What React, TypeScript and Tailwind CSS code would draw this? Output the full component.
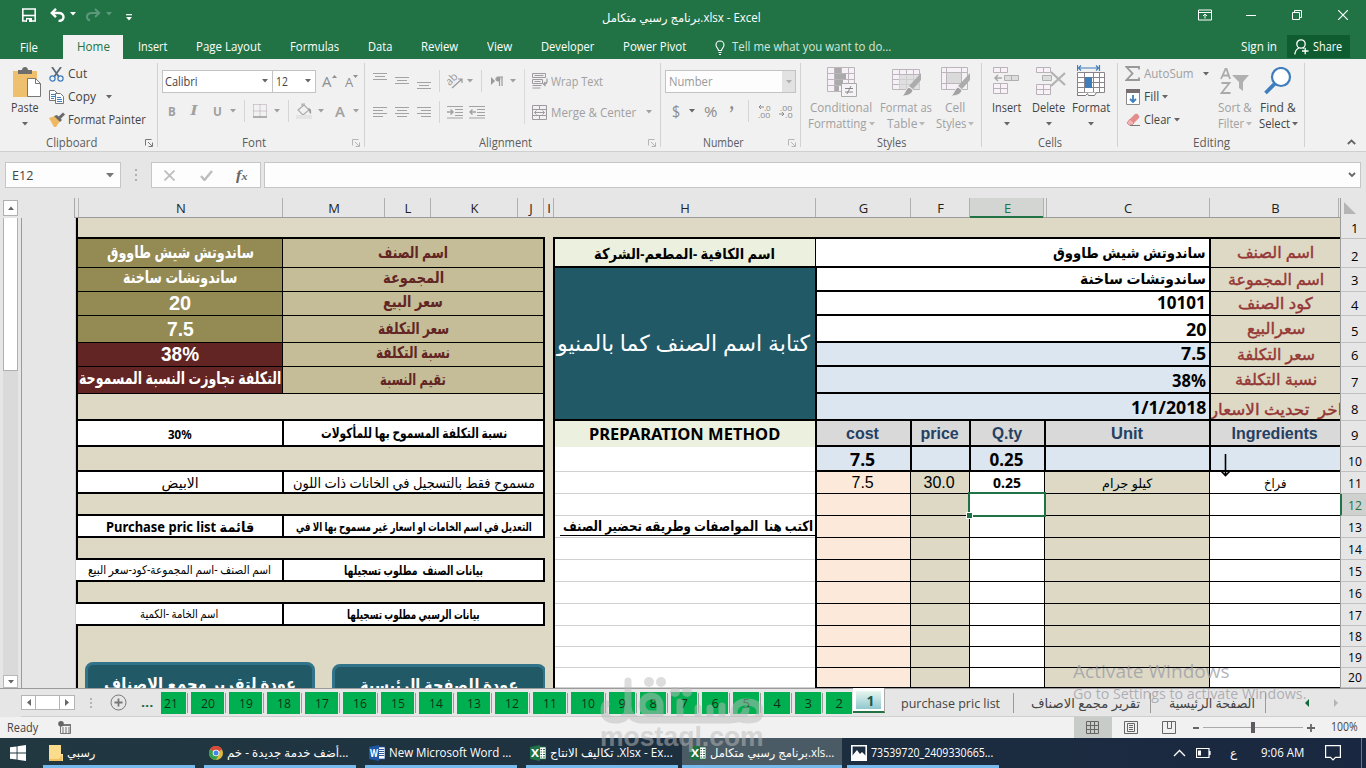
import React, { useLayoutEffect, useRef, useState } from 'react';

type FitProps = { w: number; className?: string; rtl?: boolean; children: React.ReactNode };

/* One line of text, condensed or widened to take exactly w pixels. */
function Fit({ w, className = '', rtl = false, children }: FitProps) {
  const ref = useRef<HTMLSpanElement>(null);
  const [k, setK] = useState(1);
  useLayoutEffect(() => {
    const n = ref.current;
    if (n && n.offsetWidth) setK(w / n.offsetWidth);
  }, [w, children]);
  return (
    <span className={'block shrink-0 text-left ' + className} style={{ width: w }} dir="ltr">
      <span ref={ref} dir={rtl ? 'rtl' : 'ltr'} className="inline-block origin-left whitespace-pre" style={{ transform: `scaleX(${k})` }}>
        {children}
      </span>
    </span>
  );
}

function Tri({ className = '' }: { className?: string }) {
  return (
    <svg width="6" height="4" viewBox="0 0 6 4" className={'shrink-0 ' + className}>
      <path d="M0 0h6L3 3.5z" fill="currentColor" />
    </svg>
  );
}

function Ico({ w, h, className = '', children }: { w: number; h: number; className?: string; children: React.ReactNode }) {
  return (
    <svg width={w} height={h} viewBox={`0 0 ${w} ${h}`} className={'shrink-0 ' + className} fill="none">
      {children}
    </svg>
  );
}

function Launcher({ dim = false }: { dim?: boolean }) {
  return (
    <Ico w={8} h={8} className={dim ? 'text-[#b5b5b5]' : 'text-[#777]'}>
      <path d="M.5 6.5V.5h6M3 3l4 4M7.5 3.5v4h-4" stroke="currentColor" />
    </Ico>
  );
}

function Lines({ y, widths, className = '' }: { y: number; widths: [number, number][]; className?: string }) {
  return (
    <Ico w={14} h={24} className={'text-[#a3a3a3] ' + className}>
      {widths.map(([a, b], i) => (
        <path key={i} d={`M${a} ${y + i * 3 + 0.5}H${b}`} stroke="currentColor" />
      ))}
    </Ico>
  );
}

function Group({ className, label, lw, launcher, children }: { className: string; label: string; lw: number; launcher?: React.ReactNode; children: React.ReactNode }) {
  return (
    <div className={'flex h-[92px] shrink-0 ' + className}>
      <div className="flex min-w-0 grow flex-col">
        <div className="h-[75px]">{children}</div>
        <div className="flex h-[17px] items-center">
          <div className={'flex grow justify-center ' + (launcher ? 'pr-[3px]' : '')}>
            <Fit w={lw} className="leading-[16px] text-[#5c5c5c]">{label}</Fit>
          </div>
          {launcher ? <div className="w-3 shrink-0">{launcher}</div> : null}
        </div>
      </div>
      <div className="mt-1 h-[84px] w-px bg-[#d2d2d2]" />
    </div>
  );
}

function VSep({ className = '' }: { className?: string }) {
  return <div className={'h-[22px] w-px shrink-0 bg-[#d5d5d5] ' + className} />;
}

function Big({ className, icon, a, aw, b, bw, dim }: { className: string; icon: React.ReactNode; a: string; aw: number; b?: string; bw?: number; dim?: boolean }) {
  return (
    <div className={'flex shrink-0 flex-col items-center pt-1.5 ' + (dim ? 'text-[#a0a0a0] ' : 'text-[#444] ') + className}>
      <div className="flex h-[35px] items-start justify-center pt-[2px]">{icon}</div>
      <Fit w={aw} className="leading-[16px]">{a}</Fit>
      <div className="flex h-4 items-center gap-0.5">
        {b && bw ? <Fit w={bw} className="leading-[16px]">{b}</Fit> : null}
        <Tri className={dim ? 'text-[#b8b8b8]' : 'text-[#666]'} />
      </div>
    </div>
  );
}

const tabNames: [string, number, string][] = [
  ['Insert', 29, 'ml-[15px]'],
  ['Page Layout', 65, 'ml-[29px]'],
  ['Formulas', 49, 'ml-[29px]'],
  ['Data', 24, 'ml-[29px]'],
  ['Review', 37, 'ml-[29px]'],
  ['View', 25, 'ml-[29px]'],
  ['Developer', 53, 'ml-[29px]'],
  ['Power Pivot', 63, 'ml-[29px]'],
];

function TitleBar() {
  return (
    <div className="flex h-[35px] items-start text-white">
      <div className="flex w-[602px] items-center">
        <Ico w={14} h={14} className="ml-[22px] mt-2">
          <path d="M.8 1h12.4v12H.8z" stroke="#fff" strokeWidth="1.6" />
          <path d="M1 7.5h12" stroke="#fff" strokeWidth="1.6" />
          <path d="M4 10h6v4H4z" fill="#fff" />
          <path d="M5 11.5h2V14H5z" fill="#217346" />
        </Ico>
        <Ico w={16} h={14} className="ml-[14px] mt-2">
          <path d="M2 5h6.500c3.500 0 5 1.800 5 4s-1.500 4-5 4" stroke="#fff" strokeWidth="2.400" />
          <path d="M6 .8L1.800 5L6 9.200" stroke="#fff" strokeWidth="2.400" />
        </Ico>
        <Tri className="ml-[4px] mt-1.5" />
        <Ico w={16} h={14} className="ml-[9px] mt-2">
          <path d="M14 5H7C3.500 5 2 7 2 9s1 3 3 3.500" stroke="#5c987a" strokeWidth="2" />
          <path d="M10 1l4.200 4L10 9" stroke="#5c987a" strokeWidth="2" />
        </Ico>
        <Tri className="ml-[5px] mt-1.5 text-[#5c987a]" />
        <Ico w={6} h={7} className="ml-[14px] mt-3">
          <path d="M0 .7h6" stroke="#fff" strokeWidth="1.200" />
          <path d="M0 3h6L3 6.500z" fill="#fff" />
        </Ico>
      </div>
      <Fit w={159} className="mt-[9px] leading-[18px]">برنامج رسبي متكامل.xlsx - Excel</Fit>
      <Ico w={14} h={12} className="ml-[437px] mt-[9px]">
        <path d="M.5 1h13v10H.5zM.5 3.500h13M7 9.500V5M5 7l2-2 2 2" stroke="#fff" />
      </Ico>
      <Ico w={10} h={2} className="ml-[34px] mt-[15px]">
        <path d="M0 .5h10" stroke="#fff" />
      </Ico>
      <Ico w={10} h={11} className="ml-[36px] mt-[10px]">
        <path d="M.5 2.500h7v7h-7zM2.500 2.500v-2h7v7h-2" stroke="#fff" />
      </Ico>
      <Ico w={10} h={10} className="ml-[36px] mt-[10px]">
        <path d="M0 0l10 10M10 0L0 10" stroke="#fff" strokeWidth="1.200" />
      </Ico>
    </div>
  );
}

function TabStrip() {
  return (
    <div className="flex h-6 items-center text-white">
      <Fit w={18} className="ml-5 pt-px leading-[18px]">File</Fit>
      <div className="ml-[25px] flex h-6 w-[60px] items-center justify-center bg-[#f1f1f1] text-[#217346]">
        <Fit w={33} className="leading-[18px]">Home</Fit>
      </div>
      {tabNames.map(([t, w, m]) => (
        <Fit key={t} w={w} className={'leading-[18px] ' + m}>{t}</Fit>
      ))}
      <Ico w={10} h={15} className="ml-[29px]">
        <path d="M3.500 10.500c0-2-2.500-3-2.500-5.500a4 4 0 018 0c0 2.500-2.500 3.500-2.500 5.500zM3.500 12.500h3M4 14.500h2" stroke="#fff" strokeWidth="1.100" />
      </Ico>
      <Fit w={159} className="ml-[7px] leading-[18px] text-[#d5e6dc]">Tell me what you want to do...</Fit>
      <Fit w={36} className="ml-[350px] leading-[18px]">Sign in</Fit>
      <div className="mb-px ml-[10px] flex h-[23px] w-[63px] items-center bg-[#0e5c2f]">
        <Ico w={16} h={16} className="ml-[7px]">
          <circle cx="7" cy="5" r="4.200" stroke="#fff" strokeWidth="1.300" />
          <path d="M.8 15.500c.3-3.500 2-5.500 4-6.500M10 9.500l-1-1" stroke="#fff" strokeWidth="1.300" />
          <path d="M8 12h6.500M11.200 8.800v6.500" stroke="#fff" strokeWidth="1.300" />
        </Ico>
        <Fit w={29} className="ml-[3px] leading-[18px]">Share</Fit>
      </div>
    </div>
  );
}

function Clipboard() {
  return (
    <Group className="w-[158px]" label="Clipboard" lw={51} launcher={<Launcher />}>
      <div className="flex">
        <Big
          className="ml-[11px] w-[28px]"
          a="Paste"
          aw={28}
          icon={
            <Ico w={29} h={31} className="ml-1">
              <path d="M0 4h24v26H0z" fill="#f0bf6c" />
              <path d="M3 8h18M3 12h18M3 16h18M3 20h10M3 24h10" stroke="#dfc98c" strokeDasharray="1 2" />
              <path d="M5 3h4c0-4 6-4 6 0h4v4H5z" fill="#6d6d6d" />
              <path d="M14.500 11.500h8l5 5v13h-13z" fill="#fff" stroke="#777" />
              <path d="M22.500 11.500v5h5" stroke="#777" />
            </Ico>
          }
        />
        <div className="ml-[10px] pt-[3px] text-[#444]">
          <div className="flex h-[23px] items-center">
            <Ico w={15} h={15} className="mt-px">
              <path d="M3 0l7 10M12 0L5 10" stroke="#5d6b78" strokeWidth="1.800" />
              <circle cx="3.500" cy="11.500" r="2.600" stroke="#3f7dbd" strokeWidth="1.200" />
              <circle cx="11.500" cy="11.500" r="2.600" stroke="#3f7dbd" strokeWidth="1.200" />
            </Ico>
            <Fit w={19} className="ml-1 leading-[18px]">Cut</Fit>
          </div>
          <div className="flex h-[23px] items-center">
            <Ico w={15} h={14}>
              <path d="M.5.5h5l3 3v7h-8z" fill="#fff" stroke="#777" />
              <path d="M2 4.500h4M2 6.500h4M2 8.500h3" stroke="#3f7dbd" />
              <path d="M6.500 3.500h5l3 3v7h-8z" fill="#fff" stroke="#777" />
              <path d="M8 7.500h4M8 9.500h5M8 11.500h5" stroke="#3f7dbd" />
            </Ico>
            <Fit w={28} className="ml-1 leading-[18px]">Copy</Fit>
            <Tri className="ml-[10px] text-[#666]" />
          </div>
          <div className="flex h-[23px] items-center">
            <Ico w={16} h={15}>
              <path d="M0 6l6-2 5 5-4 6H5z" fill="#efb75e" />
              <path d="M5 4l3-1 5 5-2 2z" fill="#6b6b6b" />
              <path d="M9 5l5-4.500 2 2L11.500 7z" fill="#6b6b6b" />
            </Ico>
            <Fit w={78} className="ml-[3px] leading-[18px]">Format Painter</Fit>
          </div>
        </div>
      </div>
    </Group>
  );
}

function FontGroup() {
  return (
    <Group className="w-[207px]" label="Font" lw={24} launcher={<Launcher dim />}>
      <div className="flex h-[22px] items-center pl-1 mt-[11px]">
        <div className="flex h-[23px] w-[111px] items-center border border-[#c3c3c3] bg-white">
          <Fit w={33} className="ml-[2px] pt-px leading-[18px] text-[#444]">Calibri</Fit>
          <Tri className="ml-[64px] text-[#666]" />
        </div>
        <div className="-ml-px flex h-[23px] w-[44px] items-center border border-[#c3c3c3] bg-white">
          <Fit w={12} className="ml-[3px] pt-px leading-[18px] text-[#444]">12</Fit>
          <Tri className="ml-[17px] text-[#666]" />
        </div>
        <Fit w={10} className="ml-[6px] text-[15px] leading-[22px] text-[#8f8f8f]">A</Fit>
        <svg width="5" height="3" className="mb-2.5"><path d="M0 3h5L2.500 0z" fill="#8f8f8f" /></svg>
        <Fit w={8} className="ml-[8px] pt-0.5 text-[13px] leading-[22px] text-[#8f8f8f]">A</Fit>
        <svg width="5" height="3" className="mb-2.5"><path d="M0 0h5L2.500 3z" fill="#8f8f8f" /></svg>
      </div>
      <div className="mt-[8px] flex h-[22px] items-center text-[#a0a0a0]">
        <Fit w={8} className="ml-[10px] text-[13px] font-bold leading-[22px]">B</Fit>
        <Fit w={7} className="ml-[14px] font-['Liberation_Serif'] text-[14px] font-bold italic leading-[22px]">I</Fit>
        <Fit w={9} className="ml-[16px] text-[13px] font-bold leading-[22px] underline">U</Fit>
        <Tri className="ml-[8px]" />
        <VSep className="ml-[8px]" />
        <Ico w={14} h={14} className="ml-[8px]">
          <path d="M.5 .5h13v13M.5 .5v13M7 .5v13M.5 7h13" stroke="#b0a3b0" strokeDasharray="1 1" />
          <path d="M0 13h14" stroke="#999" strokeWidth="1.500" />
        </Ico>
        <Tri className="ml-[7px]" />
        <VSep className="ml-[8px]" />
        <Ico w={17} h={16} className="ml-[7px]">
          <path d="M2 7l6-5 5 5-6 5zM6 4V1h3" stroke="#aaa" strokeWidth="1.100" />
          <path d="M12 5q4 0 3 6-2-1-2-4z" fill="#999" />
          <path d="M0 12h16v4H0z" fill="#e4e4e4" />
        </Ico>
        <Tri className="ml-[5px]" />
        <Fit w={10} className="ml-[11px] text-[15px] font-semibold leading-[22px]">A</Fit>
        <Tri className="ml-[8px]" />
      </div>
    </Group>
  );
}

function Indent({ flip = false, className = '' }: { flip?: boolean; className?: string }) {
  return (
    <Ico w={16} h={14} className={'text-[#a3a3a3] ' + className}>
      <path d="M0 1.500h16M8 4.500h8M8 7.500h8M8 10.500h8M0 13h16" stroke="currentColor" />
      <path d={flip ? 'M7 7H1M3.500 4.500L1 7l2.500 2.500' : 'M0 7h6M3.500 4.500L6 7L3.500 9.500'} stroke="currentColor" strokeWidth="1.500" />
    </Ico>
  );
}

function AlignmentGroup() {
  return (
    <Group className="w-[296px]" label="Alignment" lw={53} launcher={<Launcher dim />}>
      <div className="flex pt-[10px] text-[#a0a0a0]">
        <div className="flex w-[159px] flex-col">
          <div className="flex h-6 items-center">
            <Lines y={4} widths={[[0, 14], [2, 12], [0, 14]]} className="ml-[8px]" />
            <Lines y={8} widths={[[0, 14], [2, 12], [0, 14]]} className="ml-[8px]" />
            <Lines y={13} widths={[[0, 14], [2, 12], [0, 14]]} className="ml-[8px]" />
            <VSep className="ml-[8px]" />
            <Ico w={17} h={18} className="ml-[7px]">
              <g transform="rotate(-45 6 8)">
                <text x="-1" y="10" fontSize="11" fill="#9a9a9a">ab</text>
              </g>
              <path d="M5 16L15 7M11 7h4v4" stroke="#9a9a9a" strokeWidth="1.200" />
            </Ico>
            <Tri className="ml-[3px]" />
            <VSep className="ml-[8px]" />
            <Ico w={13} h={10} className="ml-[9px]">
              <path d="M0 1v8l4-4z" fill="#9a9a9a" />
              <path d="M8 5H7a2 2 0 010-4h5M8.500 1v9M11 1v9" stroke="#9a9a9a" strokeWidth="1.200" />
              <circle cx="7.500" cy="3" r="2" fill="#9a9a9a" />
            </Ico>
            <Tri className="ml-[6px]" />
          </div>
          <div className="mt-[7px] flex h-6 items-center">
            <Lines y={7} widths={[[0, 14], [0, 10], [0, 14], [0, 10]]} className="ml-[8px]" />
            <Lines y={7} widths={[[0, 14], [2, 12], [0, 14], [2, 12]]} className="ml-[8px]" />
            <Lines y={7} widths={[[0, 14], [4, 14], [0, 14], [4, 14]]} className="ml-[8px]" />
            <VSep className="ml-[8px]" />
            <Indent className="ml-[7px]" />
            <Indent flip className="ml-[6px]" />
          </div>
        </div>
        <div className="h-[55px] w-px bg-[#dadada]" />
        <div>
          <div className="flex h-6 items-center">
            <Ico w={16} h={16} className="ml-[7px]">
              <path d="M.5 .5h13v4H.5zM.5 6.500h10v4H.5zM.5 12.500h9M.5 15h8" stroke="#9f9a9f" />
              <path d="M2.500 2.500h9M2.500 8.500h6" stroke="#9f9a9f" />
              <path d="M15 5.500v3q0 2.500-3 2.500M13.500 9l-2 2 2 2" stroke="#9f9a9f" strokeWidth="1.200" />
            </Ico>
            <Fit w={52} className="ml-[3px] pt-0.5 leading-[18px]">Wrap Text</Fit>
          </div>
          <div className="mt-[7px] flex h-6 items-center">
            <Ico w={15} h={15} className="ml-[7px]">
              <path d="M.5 .5h14v14H.5zM.5 4.500h14M.5 10.500h14M7.500 .5v4M7.500 10.500v4M2.500 7.500h10M4.500 5.500l-2 2 2 2M10.500 5.500l2 2-2 2" stroke="#9f9a9f" />
            </Ico>
            <Fit w={85} className="ml-[4px] pt-0.5 leading-[18px]">Merge &amp; Center</Fit>
            <Tri className="ml-[10px]" />
          </div>
        </div>
      </div>
    </Group>
  );
}

function NumberGroup() {
  return (
    <Group className="w-[140px]" label="Number" lw={41} launcher={<Launcher dim />}>
      <div className="ml-1 mt-[11px] flex h-[23px] w-[131px] items-center border border-[#c3c3c3] bg-[#fdfdfd] text-[#9a9a9a]">
        <Fit w={44} className="ml-[3px] leading-[18px]">Number</Fit>
        <div className="ml-auto flex h-full w-[13px] items-center justify-center bg-[#e2e2e2]">
          <Tri className="text-[#b0b0b0]" />
        </div>
      </div>
      <div className="mt-[7px] flex h-[22px] items-center text-[#8c8c8c]">
        <Fit w={8} className="ml-[11px] text-[16px] leading-[22px]">$</Fit>
        <Tri className="ml-[9px] text-[#666]" />
        <Fit w={13} className="ml-[9px] text-[15px] leading-[22px]">%</Fit>
        <Fit w={5} className="ml-[12px] pt-1 font-['Liberation_Serif'] text-[22px] font-bold leading-[22px]">’</Fit>
        <VSep className="ml-[14px]" />
        <div className="ml-[6px] w-[16px] text-[8px] leading-[7px]">
          <div className="flex justify-end">
            <Ico w={6} h={6}><path d="M6 3H1M3 1L1 3l2 2" stroke="#8c8c8c" /></Ico>
            <Fit w={7}>.0</Fit>
          </div>
          <Fit w={12} className="ml-[3px]">.00</Fit>
        </div>
        <div className="ml-[6px] w-[16px] text-[8px] leading-[7px]">
          <Fit w={12} className="ml-[3px]">.00</Fit>
          <div className="flex justify-end">
            <Ico w={6} h={6}><path d="M0 3h5M3 1l2 2-2 2" stroke="#8c8c8c" /></Ico>
            <Fit w={8}>.0</Fit>
          </div>
        </div>
      </div>
    </Group>
  );
}

function TableGrid() {
  return <path d="M.5 .5h27v20H.5zM.5 5.500h27M.5 10.500h27M.5 15.500h27M7.500 .5v20M14.500 .5v20M21.500 .5v20" fill="#f6f1f6" stroke="#bcb6bc" />;
}

function Brush() {
  return (
    <g>
      <path d="M29 6v7l-8 9-4-3z" fill="#acacac" />
      <path d="M17 20l4 3c-1 4-5 6-11 6 4-3 3-7 7-9z" fill="#a2a2a2" stroke="#f1f1f1" />
    </g>
  );
}

function StylesGroup() {
  return (
    <Group className="w-[181px]" label="Styles" lw={29}>
      <div className="flex">
        <Big
          dim
          className="ml-[7px] w-[66px]"
          a="Conditional"
          aw={62}
          b="Formatting"
          bw={59}
          icon={
            <Ico w={30} h={31} className="ml-0.5">
              <path d="M.5 .5h27v24H.5zM.5 6.500h27M.5 12.500h27M.5 18.500h27M7.500 .5v24M14.500 .5v24M21.500 .5v24" fill="#f6f1f6" stroke="#bcb6bc" />
              <path d="M8 1h6v5H8zM8 7h11v5H8zM8 13h8v5H8zM8 19h4v5H8z" fill="#aaa" />
              <path d="M14.500 16.500h15v13h-15z" fill="#f6f3f6" stroke="#aaa" />
              <path d="M18 21.500h8M18 25h8M24 19l-4 8" stroke="#888" />
            </Ico>
          }
        />
        <Big
          dim
          className="ml-[4px] w-[56px]"
          a="Format as"
          aw={52}
          b="Table"
          bw={30}
          icon={
            <Ico w={30} h={31} className="ml-0.5">
              <g transform="translate(0 2)"><TableGrid /><path d="M7 6h21v14H7z" fill="#d8d8d8" opacity=".7" /></g>
              <Brush />
            </Ico>
          }
        />
        <Big
          dim
          className="w-[42px]"
          a="Cell"
          aw={20}
          b="Styles"
          bw={30}
          icon={
            <Ico w={30} h={31} className="ml-0.5">
              <path d="M.5 .5h26v22H.5zM.5 5.500h26M.5 16.500h26M5.500 .5v22M20.500 .5v22" fill="#f6f1f6" stroke="#bcb6bc" />
              <path d="M6 6h14v10H6z" fill="#dadada" />
              <Brush />
            </Ico>
          }
        />
      </div>
    </Group>
  );
}

function CellsGroup() {
  return (
    <Group className="w-[136px]" label="Cells" lw={24}>
      <div className="flex">
        <Big
          className="ml-[9px] w-[31px]"
          a="Insert"
          aw={29}
          icon={
            <Ico w={27} h={28}>
              <path d="M.5 .5h14v5H.5zM7.500 .5v5M.5 16.500h14v10H.5zM.5 21.500h14M7.500 16.500v10" fill="#f8f2f8" stroke="#b9b2b9" />
              <path d="M11.500 8.500h14v5h-14zM18.500 8.500v5" fill="#ddd" stroke="#b0b0b0" />
              <path d="M9 11H2M5 8l-3 3 3 3" stroke="#aaa" strokeWidth="1.500" />
            </Ico>
          }
        />
        <Big
          className="ml-[9px] w-[35px]"
          a="Delete"
          aw={33}
          icon={
            <Ico w={30} h={28} className="ml-1">
              <path d="M.5 .5h14v5H.5zM7.500 .5v5M.5 17.500h14v10H.5zM.5 22.500h14M7.500 17.500v10" fill="#f8f2f8" stroke="#b9b2b9" />
              <path d="M6.500 8.500h9v5h-9z" fill="#ddd" stroke="#b0b0b0" />
              <path d="M15 5l14 13M29 6L15 19" stroke="#b2b2b2" strokeWidth="2.200" />
            </Ico>
          }
        />
        <Big
          className="ml-[5px] w-[40px]"
          a="Format"
          aw={38}
          icon={
            <Ico w={29} h={32} className="-mt-[2px]">
              <path d="M.5 0v6M22.500 0v6M1 3h21M4 .5L1.500 3 4 5.500M19 .5L21.500 3 19 5.500" stroke="#3f7dbd" strokeWidth="1.200" />
              <path d="M.5 7.500h27v20H.5zM.5 12.500h27M.5 17.500h27M.5 22.500h27M7.500 7.500v20M16.500 7.500v20M22.500 7.500v20" fill="#fff" stroke="#8a848a" />
              <path d="M8 12h7v11H8z" fill="#3f7dbd" />
              <path d="M.5 28v2.500h8l2-2 1 2h6l2-3" stroke="#777" fill="#fff" />
            </Ico>
          }
        />
      </div>
    </Group>
  );
}

function EditingGroup() {
  return (
    <Group className="w-[187px]" label="Editing" lw={37}>
      <div className="flex">
        <div className="w-[92px] pt-[3px] text-[#444]">
          <div className="flex h-[23px] items-center text-[#a0a0a0]">
            <Ico w={15} h={15} className="ml-[7px] mb-px">
              <path d="M14 3.500V1H1.500l6 6.500-6 6.500H14v-2.500" stroke="#999" strokeWidth="1.800" />
            </Ico>
            <Fit w={50} className="ml-[4px] leading-[18px]">AutoSum</Fit>
            <Tri className="ml-[9px] text-[#666]" />
          </div>
          <div className="flex h-[23px] items-center">
            <Ico w={14} h={16} className="ml-[8px]">
              <path d="M.5 2.500h13v13H.5z" fill="#fff" stroke="#8a8a8a" />
              <path d="M0 0h14v4H0z" fill="#766e70" />
              <path d="M7 6v7M4 10l3 3 3-3" stroke="#3f7dbd" strokeWidth="1.800" />
            </Ico>
            <Fit w={15} className="ml-[4px] leading-[18px]">Fill</Fit>
            <Tri className="ml-[3px] text-[#666]" />
          </div>
          <div className="flex h-[23px] items-center">
            <Ico w={14} h={14} className="ml-[8px]">
              <path d="M4 6l5-5q2-1 3.500 1t.5 3L8 10z" fill="#e38d8d" />
              <path d="M4 6l4 4-2 2H3L1 10z" fill="#f0b4b4" stroke="#e08a8a" />
              <path d="M4 12.500h10" stroke="#777" />
            </Ico>
            <Fit w={27} className="ml-[4px] leading-[18px]">Clear</Fit>
            <Tri className="ml-[3px] text-[#666]" />
          </div>
        </div>
        <Big
          dim
          className="ml-[6px] w-[38px]"
          a="Sort &"
          aw={34}
          b="Filter"
          bw={26}
          icon={
            <Ico w={30} h={30}>
              <path d="M1 12L5.500 2h1L10 12M2.500 8.500h6M1.500 16h8L1.500 26h9" stroke="#aaa" strokeWidth="1.800" />
              <path d="M12 8h17l-6 7v9l-4-3v-6z" fill="#b0b0b0" />
            </Ico>
          }
        />
        <Big
          className="ml-[4px] w-[40px]"
          a="Find &"
          aw={36}
          b="Select"
          bw={31}
          icon={
            <Ico w={28} h={28}>
              <circle cx="17" cy="10" r="9" fill="#fff" stroke="#3f7dbd" strokeWidth="2.200" />
              <path d="M10.500 17L1.500 26" stroke="#3f7dbd" strokeWidth="3.800" />
            </Ico>
          }
        />
      </div>
    </Group>
  );
}

function FormulaBar() {
  return (
    <div className="flex h-[46px] items-start bg-[#e6e6e6] pl-[5px] pt-[10px]">
      <div className="flex h-[26px] w-[116px] items-center border border-[#c6c6c6] bg-[#fdfdfd]">
        <Fit w={21} className="ml-[6px] pt-px leading-[18px] text-[#444]">E12</Fit>
        <svg width="8" height="5" className="ml-[73px]"><path d="M0 0h8L4 4.500z" fill="#777" /></svg>
      </div>
      <div className="ml-[14px] flex h-[26px] w-[2px] flex-col justify-center gap-[3px]">
        <i className="size-[2px] bg-[#b0b0b0]" />
        <i className="size-[2px] bg-[#b0b0b0]" />
        <i className="size-[2px] bg-[#b0b0b0]" />
      </div>
      <div className="ml-[14px] flex h-[26px] w-[110px] items-center border border-[#c6c6c6] bg-[#fdfdfd]">
        <Ico w={11} h={11} className="ml-[12px]"><path d="M.5 .5l10 10M10.500 .5l-10 10" stroke="#bdbdbd" strokeWidth="1.800" /></Ico>
        <Ico w={13} h={11} className="ml-[25px]"><path d="M1 6l3.500 4L12 1" stroke="#bdbdbd" strokeWidth="2.400" /></Ico>
        <Fit w={12} className="ml-[23px] font-['Liberation_Serif'] text-[15px] font-bold italic leading-[20px] text-[#666]">
          f<span className="text-[11px]">x</span>
        </Fit>
      </div>
      <div className="ml-[3px] flex h-[26px] w-[1097px] items-center justify-end border border-[#c6c6c6] bg-[#fdfdfd] pr-[4px]">
        <Ico w={8} h={6}><path d="M1 1l3 3 3-3" stroke="#666" strokeWidth="1.800" /></Ico>
      </div>
    </div>
  );
}

const columns: [string, string][] = [
  ['N', 'w-[204px]'],
  ['M', 'w-[102px]'],
  ['L', 'w-[46px]'],
  ['K', 'w-[87px]'],
  ['J', 'w-[26px]'],
  ['I', 'w-[10px]'],
  ['H', 'w-[262px]'],
  ['G', 'w-[95px]'],
  ['F', 'w-[59px]'],
];

function ColumnHeads() {
  return (
    <div className="flex h-5 bg-[#e6e6e6] text-[#222]">
      <div className="h-5 w-[75px] shrink-0 border-r border-[#a8a8a8]" />
      <div className="flex h-5 w-[1265px] shrink-0 border-b border-[#9b9b9b] text-[13px]">
        <div className="w-[4px] shrink-0 border-r border-[#b8b8b8]" />
        {columns.map(([c, w]) => (
          <div key={c} className={'flex h-[19px] shrink-0 items-center justify-center border-r border-[#b0b0b0] pl-px leading-[18px] ' + w}>{c}</div>
        ))}
        <div className="flex h-5 w-[73px] shrink-0 items-center justify-center border-b-2 border-[#217346] bg-[#d3d5d3] pl-0.5 pt-px leading-[18px] text-[#217346]">E</div>
        <div className="w-[4px] shrink-0 border-x border-[#b0b0b0]" />
        <div className="flex h-[19px] w-[163px] shrink-0 items-center justify-center border-r border-[#b0b0b0] leading-[18px]">C</div>
        <div className="flex h-[19px] w-[129px] shrink-0 items-center justify-center border-r border-[#b0b0b0] pl-[3px] leading-[18px]">B</div>
      </div>
      <div className="flex h-5 w-[26px] items-center border-l border-[#9b9b9b] pl-[3px]">
        <Ico w={12} h={12}><path d="M0 0v12h12z" fill="#b5b5b5" /></Ico>
      </div>
    </div>
  );
}

const rowH = [
  'h-[21px]', 'h-[29px]', 'h-[24px]', 'h-[24px]', 'h-[27px]', 'h-[24px]', 'h-[27px]', 'h-[27px]', 'h-[26px]', 'h-[25px]',
  'h-[22px]', 'h-[22px]', 'h-[22px]', 'h-[22px]', 'h-[22px]', 'h-[22px]', 'h-[22px]', 'h-[21px]', 'h-[21px]', 'h-[20px]',
];

const summary: [string, number, string, number, string, string][] = [
  ['ساندوتش شيش طاووق', 147, 'اسم الصنف', 70, 'bg-[#948a54]', 'text-[17px]'],
  ['ساندوتشات ساخنة', 114, 'المجموعة', 61, 'bg-[#948a54] pb-1', 'text-[17px]'],
  ['20', 22, 'سعر البيع', 60, 'bg-[#948a54] pb-0.5', 'text-[20px]'],
  ['7.5', 27, 'سعر التكلفة', 71, 'bg-[#948a54]', 'text-[20px]'],
  ['38%', 38, 'نسبة التكلفة', 74, 'bg-[#632523] pb-0.5', 'text-[20px]'],
  ['التكلفة تجاوزت النسبة المسموحة', 202, 'تقيم النسبة', 66, 'bg-[#632523] pb-0.5', 'text-[17px]'],
];

function NoteRow({ h, a, aw, b, bw, ac, bc, open }: { h: string; a: string; aw: number; b: string; bw: number; ac: string; bc: string; open?: boolean }) {
  return (
    <div className={'flex shrink-0 text-black ' + h}>
      <div className={'flex w-[206px] items-center justify-center border-b-2 border-black bg-white ' + (open ? '' : 'border-l-2 ') + ac}>
        <Fit w={aw} rtl className="leading-[20px]">{a}</Fit>
      </div>
      <div className={'flex w-[263px] items-center justify-center border-x-2 border-b-2 border-black bg-white ' + bc}>
        <Fit w={bw} rtl className="leading-[20px]">{b}</Fit>
      </div>
    </div>
  );
}

function LeftBlock() {
  return (
    <div className="relative flex h-[470px] w-[469px] shrink-0 flex-col overflow-hidden bg-[#ddd9c4] font-['Noto_Sans','DejaVu_Sans',sans-serif]">
      <div className="h-[21px] shrink-0 border-b-2 border-l-2 border-black" />
      {summary.map(([v, vw, l, lw, bg, size], i) => (
        <div key={l} className={'flex shrink-0 font-["Liberation_Sans","DejaVu_Sans",sans-serif] font-bold ' + rowH[i + 1]}>
          <div className={'flex w-[206px] items-center justify-center border-b border-l-2 border-black text-white ' + bg + ' ' + size}>
            <Fit w={vw} rtl={i < 2 || i > 4} className="leading-[22px]">{v}</Fit>
          </div>
          <div className={'flex w-[263px] items-center justify-center border-b border-l border-r-2 border-black bg-[#c4bd97] text-[16px] text-[#632523] ' + (i === 1 || i === 2 || i === 4 ? 'pb-1' : 'pb-px')}>
            <Fit w={lw} rtl className="leading-[22px]">{l}</Fit>
          </div>
        </div>
      ))}
      <div className="h-[27px] shrink-0 border-x-2 border-b-2 border-black" />
      <NoteRow h="h-[26px]" a="30%" aw={24} b="نسبة التكلفة المسموح بها للمأكولات" bw={186} ac="text-[13px] font-bold pt-0.5" bc="text-[14px] font-bold" />
      <div className="h-[25px] shrink-0 border-x-2 border-b-2 border-black" />
      <NoteRow h="h-[22px]" a="الابيض" aw={37} b="مسموح فقط بالتسجيل في الخانات ذات اللون" bw={242} ac="text-[14px] pt-px" bc="text-[14px] pt-px" />
      <div className="h-[22px] shrink-0 border-x-2 border-b-2 border-black" />
      <NoteRow h="h-[22px]" a="قائمة Purchase pric list" aw={148} b="التعديل في اسم الخامات او اسعار غير مسموح بها الا في" bw={236} ac="text-[14px] font-bold pt-px" bc="text-[12px] font-bold pt-px" />
      <div className="h-[22px] shrink-0 border-b-2 border-l-2 border-black" />
      <NoteRow open h="h-[22px]" a="اسم الصنف -اسم المجموعة-كود-سعر البيع" aw={183} b="بيانات الصنف  مطلوب تسجيلها" bw={139} ac="text-[12px]" bc="text-[13px] font-bold" />
      <div className="h-[22px] shrink-0 border-b-2 border-l-2 border-black" />
      <NoteRow open h="h-[22px]" a="اسم الخامة -الكمية" aw={78} b="بيانات الرسبي مطلوب تسجيلها" bw={133} ac="text-[12px]" bc="text-[13px] font-bold" />
      <div className="h-[62px] shrink-0 border-l-2 border-black" />
      <div className="absolute left-[9px] top-[444px] flex h-[60px] w-[230px] justify-center rounded-lg border-[3px] border-[#31748a] bg-[#215967] pt-[6px] font-bold text-white">
        <Fit w={192} rtl className="text-[17px] leading-[26px]">عودة لتقرير مجمع الاصناف</Fit>
      </div>
      <div className="absolute left-[256px] top-[446px] flex h-[60px] w-[214px] justify-center rounded-lg border-[3px] border-[#31748a] bg-[#215967] pt-[5px] font-bold text-white">
        <Fit w={158} rtl className="text-[17px] leading-[26px]">عودة للصفحة الرئيسية</Fit>
      </div>
    </div>
  );
}

function MethodColumn() {
  return (
    <div className="flex h-[470px] w-[262px] shrink-0 flex-col overflow-hidden bg-white font-['Noto_Sans','DejaVu_Sans',sans-serif] text-black">
      <div className="h-[21px] shrink-0 border-b-2 border-black bg-[#ddd9c4]" />
      <div className="flex h-[29px] shrink-0 items-center justify-center border-b-2 border-l-2 border-black bg-[#ebf1de] pr-0.5 text-[15px] font-bold">
        <Fit w={181} rtl className="leading-[24px]">اسم الكافية -المطعم-الشركة</Fit>
      </div>
      <div className="flex h-[153px] shrink-0 items-center justify-center border-b-2 border-l-2 border-black bg-[#215967] pb-1 pr-1 text-[22px] text-white">
        <Fit w={253} rtl className="leading-[34px]">كتابة اسم الصنف كما بالمنيو</Fit>
      </div>
      <div className="flex h-[26px] shrink-0 items-center justify-center border-l-2 border-black bg-[#ebf1de] pr-0.5 text-[16px] font-bold">
        <Fit w={191} className="leading-[22px]">PREPARATION METHOD</Fit>
      </div>
      {rowH.slice(9).map((h, i) => (
        <div key={i} className={'shrink-0 border-l-2 border-black ' + h}>
          <div className="flex h-full items-center justify-end border-b border-[#d0d0d0]">
            {i === 3 ? (
              <div className="flex h-[19px] w-[255px] items-center justify-end border-b border-black pr-0.5 text-[14px] font-bold">
                <Fit w={250} rtl className="leading-[18px]">اكتب هنا  المواصفات وطريقه تحضير الصنف</Fit>
              </div>
            ) : null}
          </div>
        </div>
      ))}
    </div>
  );
}

const info: [string, number, string, number, boolean][] = [
  ['ساندوتش شيش طاووق', 153, 'اسم الصنف', 77, false],
  ['ساندوتشات ساخنة', 126, 'اسم المجموعة', 96, false],
  ['10101', 49, 'كود الصنف', 75, false],
  ['20', 20, 'سعرالبيع', 58, false],
  ['7.5', 25, 'سعر التكلفة', 78, true],
  ['38%', 34, 'نسبة التكلفة', 82, true],
  ['1/1/2018', 75, 'اخر  تحديث الاسعار', 132, true],
];

const hdr = 'flex items-center justify-center border-b-2 border-l-2 border-black pr-0.5 pt-0.5 ';

function RightBlock() {
  return (
    <div className="relative flex h-[470px] w-[525px] shrink-0 flex-col font-['Noto_Sans','DejaVu_Sans',sans-serif] text-black">
      <div className="h-[21px] shrink-0 border-b-2 border-black bg-[#ddd9c4]" />
      {info.map(([v, vw, l, lw, blue], i) => (
        <div key={l} className={'flex shrink-0 font-bold ' + rowH[i + 1]}>
          <div className={'flex w-[394px] items-center justify-end border-b-2 border-black pr-[3px] ' + (i === 0 ? 'border-l ' : 'border-l-2 ') + (i < 2 ? 'pb-0.5 ' : i === 6 ? 'pt-[3px] ' : i === 2 || i === 4 ? 'pt-0 ' : 'pt-0.5 ') + (blue ? 'bg-[#dce6f1] ' : 'bg-white ') + (i < 2 ? 'text-[15px]' : 'text-[17px]')}>
            <Fit w={vw} rtl={i < 2} className="leading-[22px]">{v}</Fit>
          </div>
          <div className={'flex w-[131px] items-center justify-center overflow-hidden border-l-2 border-black bg-[#ddd9c4] text-[16px] font-normal text-[#953735] [-webkit-text-stroke:0.4px_#953735] ' + (i === 6 ? 'border-b-2 pt-1' : 'border-b pb-0.5')}>
            <Fit w={lw} rtl className="leading-[22px]">{l}</Fit>
          </div>
        </div>
      ))}
      <div className="flex h-[26px] shrink-0 bg-[#d9d9d9] font-['Liberation_Sans'] text-[16px] font-bold text-[#244062]">
        <div className={hdr + 'w-[95px]'}><Fit w={33} className="leading-[22px]">cost</Fit></div>
        <div className={hdr + 'w-[59px]'}><Fit w={38} className="leading-[22px]">price</Fit></div>
        <div className={hdr + 'w-[75px]'}><Fit w={30} className="leading-[22px]">Q.ty</Fit></div>
        <div className={hdr + 'w-[165px]'}><Fit w={32} className="leading-[22px]">Unit</Fit></div>
        <div className={hdr + 'w-[131px]'}><Fit w={86} className="leading-[22px]">Ingredients</Fit></div>
      </div>
      <div className="flex h-[25px] shrink-0 bg-[#dce6f1] text-[17px] font-bold">
        <div className={hdr + 'w-[95px]'}><Fit w={25} className="leading-[20px]">7.5</Fit></div>
        <div className={hdr + 'w-[59px]'} />
        <div className={hdr + 'w-[75px]'}><Fit w={34} className="leading-[20px]">0.25</Fit></div>
        <div className={hdr + 'w-[165px]'} />
        <div className={hdr + 'w-[131px]'} />
      </div>
      {rowH.slice(10).map((h, i) => (
        <div key={i} className={'flex shrink-0 ' + h}>
          <div className="flex w-[95px] items-center justify-center border-b border-l-2 border-black bg-[#fde9d9] pr-0.5 pt-px font-['Liberation_Sans'] text-[16px]">
            {i === 0 ? <Fit w={22} className="leading-[20px]">7.5</Fit> : null}
          </div>
          <div className="flex w-[59px] items-center justify-center border-b border-l border-black bg-[#ddd9c4] pr-0.5 pt-px font-['Liberation_Sans'] text-[16px]">
            {i === 0 ? <Fit w={31} className="leading-[20px]">30.0</Fit> : null}
          </div>
          <div className="flex w-[75px] items-center justify-center border-b border-l border-black bg-white text-[14px] font-bold">
            {i === 0 ? <Fit w={28} className="leading-[20px]">0.25</Fit> : null}
          </div>
          <div className="flex w-[165px] items-center justify-center border-b border-l border-black bg-[#ddd9c4] text-[13px]">
            {i === 0 ? <Fit w={50} rtl className="leading-[20px]">كيلو جرام</Fit> : null}
          </div>
          <div className="flex w-[131px] items-center justify-center border-b border-l border-black bg-white text-[13px]">
            {i === 0 ? <Fit w={22} rtl className="leading-[20px]">فراخ</Fit> : null}
          </div>
        </div>
      ))}
      <div className="absolute left-[153px] top-[274px] h-[25px] w-[78px] border-2 border-[#217346]" />
      <div className="absolute left-[151px] top-[294px] size-[7px] border border-white bg-[#217346]" />
      <svg className="absolute left-[405px] top-[235px]" width="12" height="25" viewBox="0 0 12 25" fill="none">
        <path d="M5.500 1v22M1 18l4.500 4.500L10 18" stroke="#000" strokeWidth="1.600" />
      </svg>
    </div>
  );
}

function RowHeads() {
  return (
    <div className="flex h-[470px] w-[26px] shrink-0 flex-col overflow-hidden bg-[#e6e6e6] text-[13px] text-black">
      {rowH.map((h, i) => (
        <div
          key={i}
          className={
            'flex shrink-0 items-end justify-center border-b border-b-[#c0c0c0] pl-[2px] leading-[17px] ' +
            (i > 0 && i < 9 && i !== 3 ? 'pb-[2px] ' : 'pb-px ') +
            (i === 11 ? 'border-l-2 border-l-[#217346] bg-[#cfd1cf] text-[#217346] ' : 'border-l border-l-[#9b9b9b] ') + h
          }
        >
          <Fit w={i < 9 ? 7 : 14}>{i + 1}</Fit>
        </div>
      ))}
    </div>
  );
}

function Sheet() {
  return (
    <div className="flex h-[470px]">
      <div className="flex h-[470px] w-[22px] shrink-0 flex-col border-r border-[#9b9b9b] pl-[3px]">
        <div className="h-[153px] w-[15px] border border-t-0 border-[#b0b0b0] bg-white" />
        <div className="h-[304px] w-[15px] bg-[#dadada]" />
        <div className="flex h-[13px] w-[15px] items-center justify-center border border-[#b8b8b8] bg-white"><Tri className="text-[#666]" /></div>
      </div>
      <div className="w-[54px] shrink-0 border-r border-[#cfcfcf]" />
      <LeftBlock />
      <div className="w-[8px] shrink-0 bg-[#ddd9c4]" />
      <MethodColumn />
      <RightBlock />
      <RowHeads />
    </div>
  );
}

function SheetTab({ n, wide, first }: { n: number; wide: boolean; first?: boolean }) {
  return (
    <div className={'flex h-[22px] shrink-0 items-center ' + (first ? 'w-[30px]' : wide ? 'w-[38px]' : 'w-[31px]')}>
      <div className={'flex h-[22px] items-center justify-center bg-[#00b050] text-[13px] text-[#103018] ' + (first ? 'w-[25px] pr-1.5' : wide ? 'w-[33px]' : 'w-[26px]')}>
        <Fit w={n > 9 ? 14 : 7} className="leading-[22px]">{n}</Fit>
      </div>
      <div className="ml-[1px] h-5 w-px bg-[#9b9b9b]" />
    </div>
  );
}

function SheetTabs() {
  const order = Array.from({ length: 20 }, (_, i) => 21 - i);
  return (
    <div className="flex h-[29px] border-b border-[#cfcfcf] bg-[#e6e6e6]">
      <div className="flex h-[28px] w-[853px] shrink-0 items-center border-t border-[#9b9b9b]">
        <div className="h-7 w-[21px] shrink-0 bg-[#e6e6e6]" />
        <div className="flex h-[15px] w-[15px] shrink-0 items-center justify-center border border-[#b5b5b5] bg-white">
          <Ico w={4} h={7}><path d="M4 0v7L0 3.500z" fill="#666" /></Ico>
        </div>
        <div className="h-[15px] w-[24px] shrink-0 border border-l-0 border-[#b5b5b5] bg-white" />
        <div className="flex h-[15px] w-[15px] shrink-0 items-center justify-center border border-l-0 border-[#b5b5b5] bg-white">
          <Ico w={4} h={7}><path d="M0 0v7l4-3.500z" fill="#666" /></Ico>
        </div>
        <div className="ml-[15px] flex w-[2px] shrink-0 flex-col gap-[2px]">
          <i className="size-[2px] bg-[#b5b5b5]" />
          <i className="size-[2px] bg-[#b5b5b5]" />
          <i className="size-[2px] bg-[#b5b5b5]" />
        </div>
        <Ico w={17} h={17} className="ml-[18px]">
          <circle cx="8.500" cy="8.500" r="7.500" stroke="#777" />
          <path d="M8.500 4.500v8M4.500 8.500h8" stroke="#777" strokeWidth="1.800" />
        </Ico>
        <Fit w={12} className="ml-[14px] font-bold leading-[18px] text-[#1b6a3d]">...</Fit>
        <div className="ml-[8px] flex">
          {order.map((n) => <SheetTab key={n} n={n} wide={n > 9} first={n === 21} />)}
        </div>
      </div>
      <div className="h-[25px] w-[32px] shrink-0 border-b-2 border-r border-b-[#217346] border-r-[#aaa] bg-white px-[3px] pt-[3px]">
        <div className="flex h-[18px] items-center justify-center bg-linear-to-b from-[#e8f6ee] to-[#8fc8cf] pl-1 text-[14px] font-bold text-[#1d5a4a]">1</div>
      </div>
      <div className="flex h-[28px] grow items-center border-t border-[#9b9b9b] text-[13px] text-[#444]">
        <Fit w={99} className="ml-[16px] leading-[20px]">purchase pric list</Fit>
        <div className="ml-[13px] h-5 w-px bg-[#9b9b9b]" />
        <Fit w={109} rtl className="ml-[17px] leading-[20px]">تقرير مجمع الاصناف</Fit>
        <div className="ml-[10px] h-5 w-px bg-[#9b9b9b]" />
        <Fit w={86} rtl className="ml-[18px] leading-[20px]">الصفحة الرئيسية</Fit>
        <div className="ml-[10px] h-5 w-px bg-[#9b9b9b]" />
        <Ico w={4} h={8} className="ml-[39px]"><path d="M4 0v8L0 4z" fill="#0f6a38" /></Ico>
        <Ico w={4} h={8} className="ml-[25px]"><path d="M0 0v8l4-4z" fill="#b5b5b5" /></Ico>
      </div>
    </div>
  );
}

function StatusBar() {
  return (
    <div className="flex h-[21px] items-center bg-[#f1f1f1] text-[#444]">
      <Fit w={31} className="ml-[7px] leading-[18px]">Ready</Fit>
      <Ico w={14} h={14} className="ml-[20px]">
        <path d="M2.500 3.500h10v9h-10z" stroke="#777" />
        <path d="M5 3h8v2H5z" fill="#777" />
        <circle cx="3" cy="2.800" r="2.800" fill="#666" />
        <path d="M4 7h8M4 9h8M4 11h8" stroke="#777" strokeDasharray="2 1" />
      </Ico>
      <div className="ml-[1002px] flex h-[21px] w-[38px] items-center justify-center bg-[#c8ccc8]">
        <Ico w={13} h={13} className="mb-px mr-px"><path d="M.5 .5h12v12H.5zM4.500 .5v12M8.500 .5v12M.5 4.500h12M.5 8.500h12" stroke="#666" /></Ico>
      </div>
      <Ico w={14} h={13} className="mb-px ml-[12px]"><path d="M.5 .5h13v12H.5zM3.500 2.500h7v8h-7zM5 4.500h4M5 6.500h4M5 8.500h4" stroke="#666" /></Ico>
      <Ico w={14} h={13} className="mb-px ml-[24px]"><path d="M.5 .5h13v12H.5zM5.500 .5v7M9.500 .5v7M5.500 7.500h4" stroke="#666" /></Ico>
      <div className="ml-[17px] h-[2px] w-[6px] bg-[#666]" />
      <div className="ml-[4px] flex h-[12px] w-[100px] items-center">
        <div className="h-px w-[48px] bg-[#aaa]" />
        <div className="h-[11px] w-[4px] bg-[#5f5a62]" />
        <div className="h-px w-[48px] bg-[#aaa]" />
      </div>
      <Ico w={8} h={8} className="ml-[4px]"><path d="M4 0v8M0 4h8" stroke="#666" strokeWidth="1.800" /></Ico>
      <Fit w={27} className="mb-px ml-[16px] leading-[18px]">100%</Fit>
    </div>
  );
}

function Task({ className, icon, w, rtl, children }: { className: string; icon: React.ReactNode; w: number; rtl?: boolean; children: React.ReactNode }) {
  return (
    <div className={'flex h-[30px] shrink-0 items-center gap-[4px] border-b-[3px] border-[#76b9ed] pt-0.5 ' + className}>
      {icon}
      <Fit w={w} rtl={rtl} className="leading-[18px]">{children}</Fit>
    </div>
  );
}

function OfficeIcon({ letter, excel }: { letter: string; excel?: boolean }) {
  return (
    <Ico w={16} h={16}>
      <path d="M8 2h8v12H8z" fill="#fff" stroke={excel ? '#217346' : '#2b579a'} strokeWidth=".8" />
      {excel
        ? <path d="M10.500 4.500H12M13 4.500h2M10.500 7H12M13 7h2M10.500 9.500H12M13 9.500h2M10.500 12H12M13 12h2" stroke="#217346" strokeWidth="1.200" />
        : <path d="M10 4.500h5M10 6.500h5M10 8.500h5M10 10.500h5" stroke="#2b579a" />}
      <path d="M0 2l10-2v16L0 14z" fill={excel ? '#1f7244' : '#1e56a6'} />
      <text x="1" y="12" fontSize="10" fontWeight="bold" fill="#fff" textLength="8" lengthAdjust="spacingAndGlyphs">{letter}</text>
    </Ico>
  );
}

function Taskbar() {
  return (
    <div className="flex h-[30px] bg-linear-to-r from-[#213841] via-[#1d3040] to-[#1a2740] text-white">
      <div className="flex w-[43px] shrink-0 items-center pl-[10px]">
        <Ico w={16} h={16}>
          <path d="M0 2.300L6.600 1.400v6.100H0zM7.500 1.300L16 0v7.500H7.500zM0 8.400h6.600v6.200L0 13.700zM7.500 8.400H16V16l-8.500-1.200z" fill="#fff" />
        </Ico>
      </div>
      <Task className="w-[152px] pl-[6px]" w={28} rtl icon={<Ico w={14} h={16}><path d="M0 0h12v9h2v7H0z" fill="#fbdc8c" /><path d="M0 14h10l3-4v6H0z" fill="#f0c05e" /></Ico>}>رسبي</Task>
      <Task
        className="ml-[9px] w-[152px] pl-[5px]"
        w={121}
        rtl
        icon={
          <Ico w={14} h={14}>
            <circle cx="7" cy="7" r="7" fill="#e2b93b" />
            <path d="M7 7L.9 3.500A7 7 0 0113.100 3.500z" fill="#d9493a" />
            <path d="M7 7L.9 3.500A7 7 0 007 14l3-5.500z" fill="#37a04f" />
            <circle cx="7" cy="7" r="3.300" fill="#fff" />
            <circle cx="7" cy="7" r="2.500" fill="#4285e8" />
          </Ico>
        }
      >
        ...أضف خدمة جديدة - خم
      </Task>
      <Task className="ml-[9px] w-[152px] pl-[4px]" w={122} icon={<OfficeIcon letter="W" />}>New Microsoft Word ...</Task>
      <Task className="ml-[9px] w-[152px] pl-[4px]" w={123} icon={<OfficeIcon letter="X" excel />}>تكاليف الانتاج .Xlsx - Ex...</Task>
      <Task className="ml-[4px] w-[160px] bg-[#4b5b65] pl-[8px]" w={124} icon={<OfficeIcon letter="X" excel />}>برنامج رسبي متكامل.xls...</Task>
      <Task className="ml-[5px] w-[152px] pl-[4px]" w={122} icon={<Ico w={16} h={16}><path d="M.8 .8h14.400v14.400H.8z" stroke="#fff" strokeWidth="1.600" /><path d="M1 11l5-6 3 4 2-2 4 4v4H1z" fill="#fff" /></Ico>}>73539720_2409330665...</Task>
      <div className="flex grow items-center">
        <Ico w={13} h={8} className="ml-[174px]"><path d="M1 7l5.500-5.500L12 7" stroke="#fff" strokeWidth="1.300" /></Ico>
        <Ico w={15} h={10} className="ml-[10px]"><path d="M.5 .5h12.500v9H.5zM14 3v4" stroke="#fff" strokeWidth="1.200" /><path d="M2 2.500h3v5H2z" fill="#fff" /></Ico>
        <Fit w={7} rtl className="ml-[19px] leading-[18px]">ع</Fit>
        <Fit w={43} className="ml-[24px] leading-[18px]">9:06 AM</Fit>
        <Ico w={16} h={16} className="ml-[21px]"><path d="M.6 .6h14.800v11.800h-4.900L8 15l-2.500-2.600H.6z" stroke="#fff" strokeWidth="1.200" /></Ico>
        <div className="ml-[20px] h-[30px] w-px bg-[#6c7888]" />
      </div>
    </div>
  );
}

function Watermarks() {
  return (
    <>
      <div className="pointer-events-none absolute left-[1073px] top-[659px] text-[#9a9aa4]/75">
        <Fit w={157} className="text-[18px] leading-[24px]">Activate Windows</Fit>
        <Fit w={233} className="text-[14px] leading-[22px]">Go to Settings to activate Windows.</Fit>
      </div>
      <div className="pointer-events-none absolute left-[600px] top-[674px] text-[#bcbcbc] opacity-50">
        <svg width="168" height="54" viewBox="0 0 168 54" fill="none" className="block">
          <g stroke="currentColor" strokeWidth="7" strokeLinecap="round" strokeLinejoin="round">
            <path d="M28 7V34Q28 46 16 46T4 36Q4 32 6 30" />
            <path d="M28 34Q30 46 42 46H128Q144 46 146 36" />
            <path d="M60 45V31a9 9 0 10-9 9h8" />
            <path d="M80 45V28M98 45V34M110 45V34M122 45V32" />
            <path d="M134 45q-2-17 12-17 14 0 14 10 0 8-12 8-10 0-14-6" />
          </g>
          <g fill="currentColor"><circle cx="49" cy="8" r="5" /><circle cx="61" cy="8" r="5" /><circle cx="75" cy="18" r="5" /><circle cx="87" cy="18" r="5" /></g>
        </svg>
        <Fit w={164} className="-mt-[9px] font-['Liberation_Sans'] text-[28px] font-bold leading-[36px]">mostaql.com</Fit>
      </div>
    </>
  );
}

export default function App() {
  return (
    <div className="relative h-[768px] w-[1366px] overflow-hidden bg-[#e6e6e6] font-['Open_Sans','DejaVu_Sans',sans-serif] text-[12px]">
      <div className="bg-[#217346]">
        <TitleBar />
        <TabStrip />
      </div>
      <div className="flex h-[93px] border-b border-[#cfcfcf] bg-[#f1f1f1]">
        <Clipboard />
        <FontGroup />
        <AlignmentGroup />
        <NumberGroup />
        <StylesGroup />
        <CellsGroup />
        <EditingGroup />
        <div className="flex grow items-end justify-end pb-[6px] pr-[10px]">
          <Ico w={9} h={6}><path d="M.8 5L4.500 1.500L8.200 5" stroke="#666" strokeWidth="1.800" /></Ico>
        </div>
      </div>
      <FormulaBar />
      <div className="relative">
        <ColumnHeads />
        <div className="absolute left-[3px] top-[2px] flex h-[16px] w-[15px] items-center justify-center border border-[#b0b0b0] bg-white">
          <Tri className="rotate-180 text-[#666]" />
        </div>
      </div>
      <Sheet />
      <SheetTabs />
      <StatusBar />
      <Taskbar />
      <Watermarks />
    </div>
  );
}
